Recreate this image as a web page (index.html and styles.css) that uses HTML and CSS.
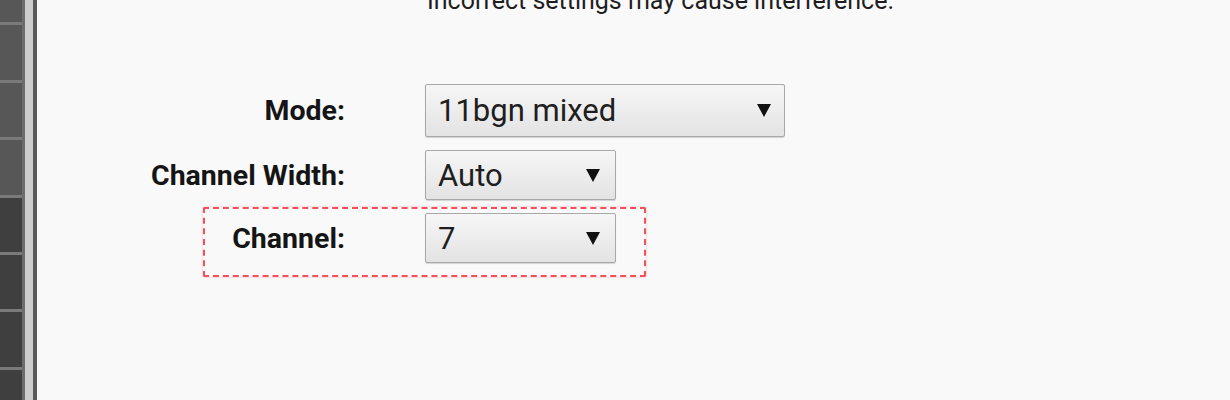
FILE: index.html
```html
<!DOCTYPE html>
<html>
<head>
  <meta charset="utf-8">
  <title>Wireless settings</title>
  <link rel="stylesheet" href="styles.css">
</head>
<body>
  <div class="page">
    <aside class="rail">
      <div class="tiles">
        <div class="tile"></div>
        <div class="tile"></div>
        <div class="tile"></div>
        <div class="tile"></div>
        <div class="tile dark"></div>
        <div class="tile dark"></div>
        <div class="tile dark"></div>
        <div class="tile dark"></div>
      </div>
      <div class="rail-edge"></div>
    </aside>

    <main class="content">
      <p class="notice">Incorrect settings may cause interference.</p>

      <div class="fields">
        <div class="field">
          <label>Mode:</label>
          <div class="select wide">
            <span>11bgn mixed</span>
            <svg class="caret" viewBox="0 0 14 13"><polygon points="0,0 14,0 7,13"/></svg>
          </div>
        </div>

        <div class="field">
          <label>Channel Width:</label>
          <div class="select">
            <span>Auto</span>
            <svg class="caret" viewBox="0 0 14 13"><polygon points="0,0 14,0 7,13"/></svg>
          </div>
        </div>

        <div class="field flagged">
          <label>Channel:</label>
          <div class="select">
            <span>7</span>
            <svg class="caret" viewBox="0 0 14 13"><polygon points="0,0 14,0 7,13"/></svg>
          </div>
        </div>
      </div>
    </main>
  </div>
</body>
</html>
```

FILE: styles.css
```css
/* основа */
body {
  margin: 0;
  background: #f9f9f9;
  font-family: Roboto, "Liberation Sans", sans-serif;
  color: #1e1e1e;
}

.page {
  display: flex;
  height: 400px;
  overflow: hidden;
}

/* левая панель с плитками */
.rail {
  display: flex;
  width: 37px;
  flex-shrink: 0;
  overflow: hidden;
}

.tiles {
  width: 22px;
  display: flex;
  flex-direction: column;
  gap: 3px;
  margin-top: -32px;
  background: #7a7a7a;
}

.tile {
  height: 54.4px;
  flex-shrink: 0;
  background: #575757;
}

.tile.dark {
  background: #3f3f3f;
}

.rail-edge {
  width: 15px;
  border-left: 3px solid #6c6c6c;
  border-right: 4px solid #5a5a5a;
  background: #cdcdcd;
  box-sizing: border-box;
}

/* форма */
.content {
  flex: 1;
  padding-left: 103px;
}

.notice {
  margin: -14px 0 0 287px;
  font-size: 25px;
  line-height: 30px;
}

.fields {
  display: flex;
  flex-direction: column;
  gap: 13px;
  margin-top: 68px;
}

.field {
  display: flex;
  align-items: center;
  gap: 80px;
  width: max-content;
}

.field label {
  width: 205px;
  text-align: right;
  font-weight: bold;
  font-size: 28.5px;
  color: #151515;
}

.select {
  width: 191px;
  height: 50px;
  box-sizing: border-box;
  display: flex;
  align-items: center;
  justify-content: space-between;
  padding: 0 15px 0 12px;
  border: 1px solid #a8a8a8;
  border-radius: 2px;
  background: linear-gradient(#f6f6f6, #e3e3e3);
  box-shadow: 0 1px 1px rgba(0, 0, 0, 0.15);
  font-size: 31px;
}

.select.wide {
  width: 360px;
  height: 53px;
  padding-right: 13px;
}

.caret {
  width: 14px;
  height: 13px;
  fill: #111;
}

/* пометка на скриншоте */
.flagged {
  position: relative;
}

.flagged::after {
  content: "";
  position: absolute;
  left: 63px;
  right: -30px;
  top: -6px;
  bottom: -14px;
  border: 2px dashed #f2515c;
  border-radius: 2px;
  box-shadow: 0 0 2px rgba(242, 81, 92, 0.5);
}
```
